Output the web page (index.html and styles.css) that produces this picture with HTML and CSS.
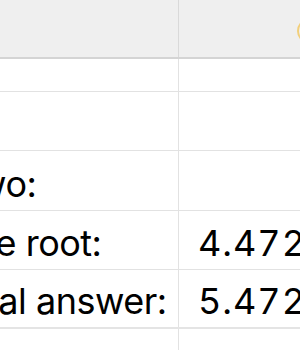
FILE: index.html
```html
<!DOCTYPE html>
<html lang="en">
<head>
<meta charset="utf-8">
<title>Sheet</title>
<link rel="stylesheet" href="styles.css">
</head>
<body>
<div class="sheet">
  <div class="row head">
    <div class="cell col-a"></div>
    <div class="cell col-b"><span class="marker"></span></div>
  </div>
  <div class="row short">
    <div class="cell col-a"></div>
    <div class="cell col-b"></div>
  </div>
  <div class="row">
    <div class="cell col-a"></div>
    <div class="cell col-b"></div>
  </div>
  <div class="row tall">
    <div class="cell col-a"><span class="label">Again, times two:</span></div>
    <div class="cell col-b"></div>
  </div>
  <div class="row">
    <div class="cell col-a"><span class="label">Take the square root:</span></div>
    <div class="cell col-b"><span class="value">4.472</span></div>
  </div>
  <div class="row last">
    <div class="cell col-a"><span class="label">Add one for final answer:</span></div>
    <div class="cell col-b"><span class="value">5.472</span></div>
  </div>
  <div class="row">
    <div class="cell col-a"></div>
    <div class="cell col-b"></div>
  </div>
</div>
</body>
</html>
```

FILE: styles.css
```css
html, body {
  margin: 0;
  padding: 0;
  background: #ffffff;
  overflow: hidden;
  width: 300px;
  height: 350px;
}

.sheet {
  margin-left: -421px;
  width: 800px;
  font-family: "Inter", "Liberation Sans", sans-serif;
  font-size: 36px;
  color: #000000;
}

.row {
  display: grid;
  grid-template-columns: 600px 200px;
  height: 58px;
  border-bottom: 1px solid #e2e2e2;
}

.row.head {
  height: 57px;
  background: #efefef;
  border-bottom: 2px solid #d4d4d4;
}

.row.short {
  height: 32px;
}

.row.tall {
  height: 59px;
}

.row.last {
  border-bottom: 2px solid #e4e4e4;
  height: 57px;
}

.cell {
  display: flex;
  align-items: flex-end;
  padding: 0 0 4px 0;
  box-sizing: border-box;
  overflow: hidden;
  white-space: nowrap;
  position: relative;
}

.col-a {
  border-right: 1px solid #e2e2e2;
  padding-left: 173px;
}

.head .col-a {
  border-right-color: #d9d9d9;
}

.col-b {
  padding-left: 19px;
}

.label {
  letter-spacing: -0.5px;
}

.value {
  font-variant-numeric: tabular-nums;
  letter-spacing: 1px;
}

.marker {
  position: absolute;
  left: 118px;
  top: 18px;
  width: 22px;
  height: 22px;
  border: 2px solid #f2cf7a;
  border-radius: 50%;
}
```
